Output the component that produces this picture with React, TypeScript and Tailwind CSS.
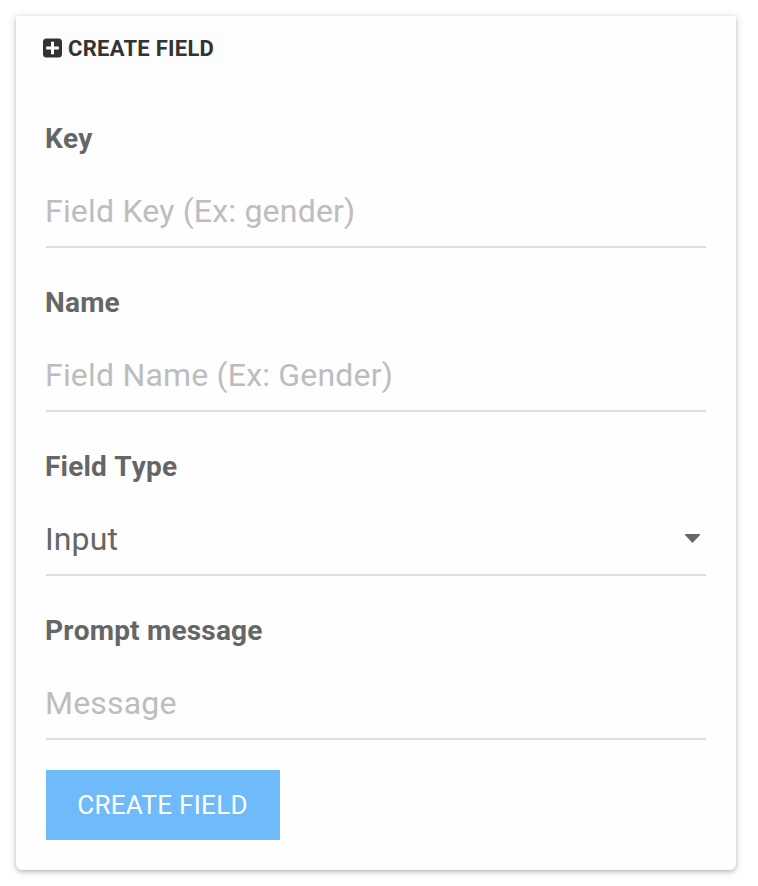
import React from "react";

function Label({ children }: { children: React.ReactNode }) {
  return (
    <div className="-ml-px h-[36px] text-[28px] leading-[36px] font-bold tracking-[0.2px] text-[#666666] [font-kerning:none]">
      {children}
    </div>
  );
}

function Field({ label, children }: { label: string; children: React.ReactNode }) {
  return (
    <div className="h-[164px]">
      <Label>{label}</Label>
      <div className="mt-[17px] flex h-[74px] items-center justify-between border-b-2 border-[#dcdcdc] pt-[2px] text-[32px] tracking-[0.2px]">
        {children}
      </div>
    </div>
  );
}

export default function App() {
  return (
    <div className="h-[886px] w-[758px] overflow-hidden bg-white pt-4 pl-4 font-[Roboto,sans-serif]">
      <div className="h-[854px] w-[720px] rounded-t-[2px] rounded-b-[6px] bg-[#fefefe] shadow-[0_2px_4px_rgba(0,0,0,0.18),0_1px_8px_rgba(0,0,0,0.14)]">
        <header className="flex h-[68px] items-start rounded-t-[2px] bg-[#fdfdfd] pl-[27px] text-[#333333]">
          <svg width="19" height="20" viewBox="0 0 19 20" className="mt-[22px]">
            <rect y="0.5" width="19" height="19" rx="3.5" fill="#333333" />
            <path d="M9.5 3.8v12.4M3.2 10h12.6" stroke="#fff" strokeWidth="3" />
          </svg>
          <span className="mt-[16px] ml-[6px] text-[22px] leading-[33px] font-bold tracking-[0.27px] whitespace-nowrap">CREATE FIELD</span>
        </header>
        <main className="px-[30px] pt-[37px]">
          <Field label="Key"><span className="-ml-px text-[#bdbdbd]">Field Key (Ex: gender)</span></Field>
          <Field label="Name"><span className="-ml-px text-[#bdbdbd]">Field Name (Ex: Gender)</span></Field>
          <Field label="Field Type">
            <span className="-ml-px tracking-[0.1px] text-[#666666]">Input</span>
            <svg width="15" height="9" viewBox="0 0 15 9" className="mr-[6px] mb-[2px]"><path d="M0 0h15v1L7.5 9 0 1z" fill="#666666" /></svg>
          </Field>
          <Field label="Prompt message"><span className="-ml-px text-[#bdbdbd]">Message</span></Field>
          <button className="-mt-[7px] block h-[70px] w-[234px] bg-[#6fbaf8] pr-[1px] text-[26px] tracking-[0.3px] text-white">CREATE FIELD</button>
        </main>
      </div>
    </div>
  );
}
